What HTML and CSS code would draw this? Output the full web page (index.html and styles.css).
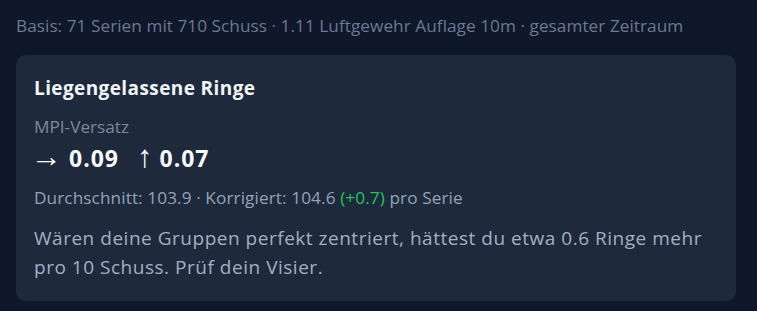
FILE: index.html
```html
<!DOCTYPE html>
<html lang="de">
<head>
<meta charset="utf-8">
<link rel="stylesheet" href="styles.css">
</head>
<body>
<p class="basis">Basis: 71 Serien mit 710 Schuss · 1.11 Luftgewehr Auflage 10m · gesamter Zeitraum</p>
<section class="card">
  <h2 class="title">Liegengelassene Ringe</h2>
  <div class="label">MPI-Versatz</div>
  <div class="offset"><span class="val"><span class="arrow arrow-x">→</span> 0.09</span><span class="val"><span class="arrow">↑</span> 0.07</span></div>
  <div class="stats">Durchschnitt: 103.9 · Korrigiert: 104.6 <span class="gain">(+0.7)</span> pro Serie</div>
  <p class="hint">Wären deine Gruppen perfekt zentriert, hättest du etwa 0.6 Ringe mehr pro 10 Schuss. Prüf dein Visier.</p>
</section>
</body>
</html>
```

FILE: styles.css
```css
html, body {
  margin: 0;
  background: #0f172a;
}
body {
  padding: 14px 21px 11px 16px;
  font-family: "Open Sans", "Noto Sans", sans-serif;
  color: #94a3b8;
}
.basis {
  margin: 0 0 17px;
  font-size: 17.2px;
  line-height: 24px;
  letter-spacing: 0.05px;
  color: #6b7a90;
}
.card {
  background: #1e293b;
  border-radius: 10px;
  padding: 20px 18px 19px;
}
.title {
  margin: 0;
  font-size: 19px;
  line-height: 26px;
  letter-spacing: 0.4px;
  font-weight: 700;
  color: #f1f5f9;
}
.label {
  margin-top: 14px;
  font-size: 17.2px;
  line-height: 24px;
  color: #7b899d;
}
.offset {
  display: flex;
  gap: 18px;
  margin-top: 3px;
  font-size: 23px;
  line-height: 32px;
  letter-spacing: 1px;
  font-weight: 700;
  color: #f8fafc;
}
.arrow {
  font-family: "Noto Sans", sans-serif;
  font-size: 31px;
  line-height: 0.8;
  font-weight: 400;
  letter-spacing: 0;
}
.arrow-x {
  margin-left: -3px;
}
.stats {
  margin-top: 12px;
  font-size: 17.2px;
  line-height: 24px;
  letter-spacing: 0.1px;
  color: #94a3b8;
}
.gain {
  color: #22c55e;
}
.hint {
  margin: 14px 0 0;
  font-size: 19px;
  line-height: 29px;
  letter-spacing: 0.52px;
  color: #a3b0c2;
}
```
